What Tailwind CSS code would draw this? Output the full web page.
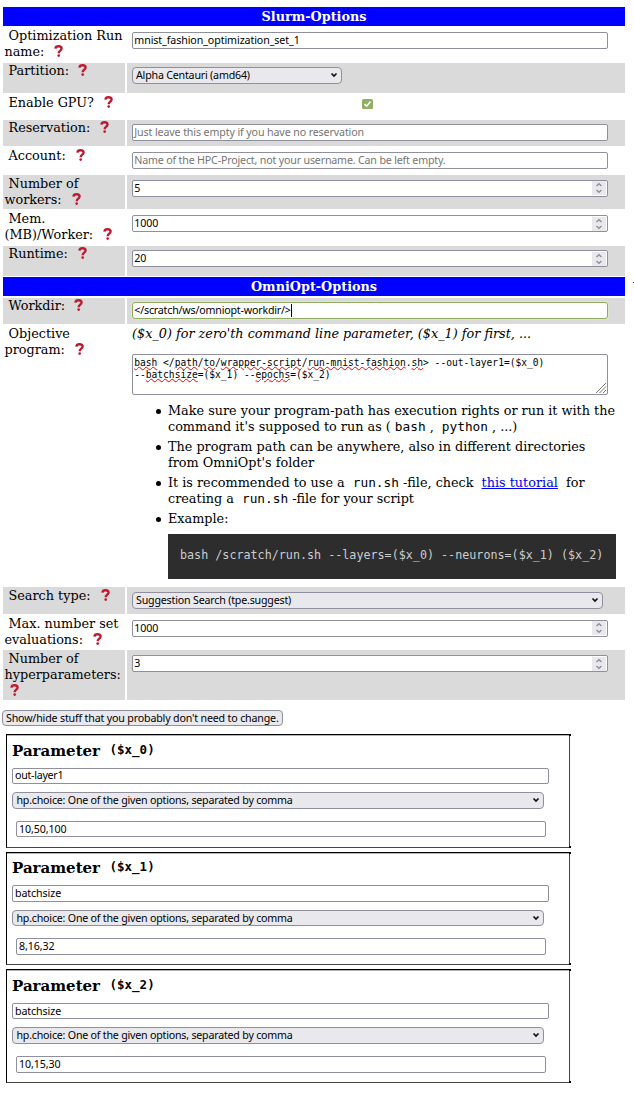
<!DOCTYPE html>
<html lang="en">
<head>
<meta charset="utf-8">
<title>OmniOpt</title>
<script src="https://cdn.jsdelivr.net/npm/@tailwindcss/browser@4"></script>
</head>
<body class="relative bg-white h-[1093px] overflow-hidden pt-[7px] text-[12.8px] leading-4 text-black font-['DejaVu_Serif',serif]">
<svg class="hidden">
  <symbol id="q" viewBox="0 0 9 12"><path d="M1.400 3.700C1.600 2 2.800 1.300 4.500 1.300c1.900 0 3.100.9 3.100 2.300 0 1.200-.8 1.800-1.700 2.300C5.100 6.400 4.700 6.900 4.700 8.200" fill="none" stroke="#be1931" stroke-width="2.400"/><circle cx="4.700" cy="10.600" r="1.350" fill="#be1931"/></symbol>
  <symbol id="chev" viewBox="0 0 8 6"><path d="M1.500 1.500 4 4l2.500-2.500" fill="none" stroke="#111" stroke-width="1.700"/></symbol>
  <symbol id="spin" viewBox="0 0 14 14"><path d="M4.500 5 7 2.800 9.500 5M4.500 9 7 11.200 9.500 9" fill="none" stroke="#8f8f9d" stroke-width="1.500"/></symbol>
</svg>

<main class="ml-[3px] w-[622px] flex flex-col">
  <h1 class="h-[19px] bg-[#0000ff] text-white font-bold text-center leading-[19px]">Slurm-Options</h1>

  <div class="mt-[2px] grid grid-cols-[122px_496px] gap-x-1 h-[33px]">
    <div class="pl-[1.5px] whitespace-nowrap"><span class="ml-1">Optimization Run</span><br>name:<svg class="inline align-[-1px] ml-[10px] w-[9px] h-3"><use href="#q"/></svg></div>
    <div class="pl-[3px] pt-1"><div class="w-[476px] h-[17px] bg-white border border-[#8f8f9d] rounded-[2px] pl-[1.3px] leading-[14px] text-[10.67px] font-['Noto_Sans',sans-serif] tracking-[-.09px]">mnist_fashion_optimization_set_1</div></div>
  </div>

  <div class="mt-[2px] flex gap-[2px] h-[30px]">
    <div class="w-[122px] bg-[#dadada] pl-[5.500px]">Partition:<svg class="inline align-[-1px] ml-[9px] w-[9px] h-3"><use href="#q"/></svg></div>
    <div class="w-[498px] bg-[#dadada] pl-[5px] pt-1"><div class="w-[210px] h-[17px] flex items-center justify-between bg-[#e9e9ed] border border-[#8f8f9d] rounded-[4px] pl-[3px] pr-[3px] leading-[14px] pb-px text-[10.67px] font-['Noto_Sans',sans-serif] tracking-[-.2px]">Alpha Centauri (amd64)<svg class="w-2 h-1.5"><use href="#chev"/></svg></div></div>
  </div>

  <div class="mt-[2px] flex gap-[2px] h-[23px]">
    <div class="w-[122px] pl-[5.500px]">Enable GPU?<svg class="inline align-[-1px] ml-[10px] w-[9px] h-3"><use href="#q"/></svg></div>
    <div class="w-[498px] pl-[235px] pt-1"><svg class="w-[11px] h-[10px]" viewBox="0 0 11 10"><rect width="11" height="10" rx="1.500" fill="#92ae62"/><path d="M2.500 5.200 4.600 7.200 8.500 2.500" fill="none" stroke="#fff" stroke-width="1.600"/></svg></div>
  </div>

  <div class="mt-[2px] flex gap-[2px] h-[26px]">
    <div class="w-[122px] bg-[#dadada] pl-[5.500px]">Reservation:<svg class="inline align-[-1px] ml-[10px] w-[9px] h-3"><use href="#q"/></svg></div>
    <div class="w-[498px] bg-[#dadada] pl-[5px] pt-1"><div class="w-[476px] h-[17px] bg-white border border-[#8f8f9d] rounded-[2px] pl-[1.3px] leading-[14px] text-[10.67px] font-['Noto_Sans',sans-serif] text-[#757575] tracking-[-.12px]">Just leave this empty if you have no reservation</div></div>
  </div>

  <div class="mt-[2px] flex gap-[2px] h-[25px]">
    <div class="w-[122px] pl-[5.500px]">Account:<svg class="inline align-[-1px] ml-[10px] w-[9px] h-3"><use href="#q"/></svg></div>
    <div class="w-[498px] pl-[5px] pt-1"><div class="w-[476px] h-[17px] bg-white border border-[#8f8f9d] rounded-[2px] pl-[1.3px] leading-[14px] text-[10.67px] font-['Noto_Sans',sans-serif] text-[#757575] tracking-[-.175px]">Name of the HPC-Project, not your username. Can be left empty.</div></div>
  </div>

  <div class="mt-[2px] flex gap-[2px] h-[34px]">
    <div class="w-[122px] bg-[#dadada] pl-[1.5px] pt-px"><span class="ml-1">Number of</span><br>workers:<svg class="inline align-[-1px] ml-[10px] w-[9px] h-3"><use href="#q"/></svg></div>
    <div class="w-[498px] bg-[#dadada] pl-[5px] pt-[5px]"><div class="w-[476px] h-[17px] flex justify-between bg-white border border-[#8f8f9d] rounded-[2px] pl-[1.3px] pr-px leading-[14px] text-[10.67px] font-['Noto_Sans',sans-serif]">5<svg class="w-[14px] h-[14px] bg-[#e9e9ed]"><use href="#spin"/></svg></div></div>
  </div>

  <div class="mt-[2px] flex gap-[2px] h-[33px]">
    <div class="w-[122px] pl-[1.5px]"><span class="ml-1">Mem.</span><br>(MB)/Worker:<svg class="inline align-[-1px] ml-[10px] w-[9px] h-3"><use href="#q"/></svg></div>
    <div class="w-[498px] pl-[5px] pt-1"><div class="w-[476px] h-[17px] flex justify-between bg-white border border-[#8f8f9d] rounded-[2px] pl-[1.3px] pr-px leading-[14px] text-[10.67px] font-['Noto_Sans',sans-serif] tracking-[-.1px]">1000<svg class="mt-px w-[14px] h-[14px] bg-[#e9e9ed]"><use href="#spin"/></svg></div></div>
  </div>

  <div class="mt-[2px] flex gap-[2px] h-[30px]">
    <div class="w-[122px] bg-[#dadada] pl-[5.500px]">Runtime:<svg class="inline align-[-1px] ml-[10px] w-[9px] h-3"><use href="#q"/></svg></div>
    <div class="w-[498px] bg-[#dadada] pl-[5px] pt-1"><div class="w-[476px] h-[17px] flex justify-between bg-white border border-[#8f8f9d] rounded-[2px] pl-[1.3px] pr-px leading-[14px] text-[10.67px] font-['Noto_Sans',sans-serif] tracking-[-.1px]">20<svg class="mt-px w-[14px] h-[14px] bg-[#e9e9ed]"><use href="#spin"/></svg></div></div>
  </div>

  <h1 class="mt-px h-[19px] bg-[#0000ff] text-white font-bold text-center leading-[19px]">OmniOpt-Options</h1>

  <div class="mt-[2px] flex gap-[2px] h-[26px]">
    <div class="w-[122px] bg-[#dadada] pl-[5.500px]">Workdir:<svg class="inline align-[-1px] ml-[9px] w-[9px] h-3"><use href="#q"/></svg></div>
    <div class="w-[498px] bg-[#dadada] pl-[5px] pt-1"><div class="w-[476px] h-[17px] flex bg-white border border-[#8fac5f] rounded-[3px] ring-1 ring-[#dce8c8] pl-[1.3px] leading-[14px] text-[10.67px] font-['Noto_Sans',sans-serif] tracking-[-.19px]">&lt;/scratch/ws/omniopt-workdir/&gt;<span class="mt-px w-px h-[13px] bg-black"></span></div></div>
  </div>

  <div class="mt-[2px] flex gap-[2px] h-[259px]">
    <div class="w-[122px] pl-[1.5px]"><span class="ml-1">Objective</span><br>program:<svg class="inline align-[-1px] ml-[10px] w-[9px] h-3"><use href="#q"/></svg></div>
    <div class="w-[498px] pl-[5px]">
      <p class="italic whitespace-nowrap">($x_0) for zero'th command line parameter, ($x_1) for first, ...</p>
      <div class="relative mt-3 w-[476px] h-[41px] bg-white border border-[#8f8f9d] rounded-[2px] pl-[1.2px] pt-[2px] leading-3 text-[9.6px] font-['DejaVu_Sans_Mono',monospace] whitespace-nowrap"><span class="underline decoration-wavy decoration-[#ff0000] decoration-[0.8px] underline-offset-0">bash</span> &lt;/<span class="underline decoration-wavy decoration-[#ff0000] decoration-[0.8px] underline-offset-0">path</span>/<span class="underline decoration-wavy decoration-[#ff0000] decoration-[0.8px] underline-offset-0">to</span>/<span class="underline decoration-wavy decoration-[#ff0000] decoration-[0.8px] underline-offset-0">wrapper-script</span>/<span class="underline decoration-wavy decoration-[#ff0000] decoration-[0.8px] underline-offset-0">run-mnist-fashion</span>.<span class="underline decoration-wavy decoration-[#ff0000] decoration-[0.8px] underline-offset-0">sh</span>&gt; --out-layer1=($x_0)<br>--<span class="underline decoration-wavy decoration-[#ff0000] decoration-[0.8px] underline-offset-0">batchsize</span>=($x_1) --<span class="underline decoration-wavy decoration-[#ff0000] decoration-[0.8px] underline-offset-0">epochs</span>=($x_2)
        <svg class="absolute right-px bottom-px w-[10px] h-[10px]" viewBox="0 0 10 10"><path d="M0 10 10 0M3.500 10 10 3.500M7 10l3-3" stroke="#666" stroke-width=".9"/></svg>
      </div>
      <ul class="mt-2 pl-9 flex flex-col gap-1 whitespace-nowrap">
        <li class="relative before:absolute before:-left-3 before:top-[6px] before:size-[5px] before:rounded-full before:bg-black">Make sure your program-path has execution rights or run it with the<br>command it's supposed to run as (<code class="px-1 font-['DejaVu_Sans_Mono',monospace] leading-none text-[12.8px]">bash</code>, <code class="px-1 font-['DejaVu_Sans_Mono',monospace] leading-none text-[12.8px]">python</code>, ...)</li>
        <li class="relative before:absolute before:-left-3 before:top-[6px] before:size-[5px] before:rounded-full before:bg-black">The program path can be anywhere, also in different directories<br>from OmniOpt's folder</li>
        <li class="relative before:absolute before:-left-3 before:top-[6px] before:size-[5px] before:rounded-full before:bg-black">It is recommended to use a <code class="px-1 font-['DejaVu_Sans_Mono',monospace] leading-none text-[12.8px]">run.sh</code>-file, check <a class="mx-1 text-[#0000ee] underline">this tutorial</a> for<br>creating a <code class="px-1 font-['DejaVu_Sans_Mono',monospace] leading-none text-[12.8px]">run.sh</code>-file for your script</li>
        <li class="relative before:absolute before:-left-3 before:top-[6px] before:size-[5px] before:rounded-full before:bg-black">Example:
          <pre class="mt-[7px] w-[448px] h-[45px] bg-[#2d2d2d] text-[#cccccc] pl-3 pt-3 leading-[18px] text-[11.72px] font-['DejaVu_Sans_Mono',monospace]">bash /scratch/run.sh --layers=($x_0) --neurons=($x_1) ($x_2)</pre>
        </li>
      </ul>
    </div>
  </div>

  <div class="mt-[2px] flex gap-[2px] h-[27px]">
    <div class="w-[122px] bg-[#dadada] pl-[5.500px] pt-px">Search type:<svg class="inline align-[-1px] ml-[10px] w-[9px] h-3"><use href="#q"/></svg></div>
    <div class="w-[498px] bg-[#dadada] pl-[5px] pt-[5px]"><div class="w-[471px] h-[17px] flex items-center justify-between bg-[#e9e9ed] border border-[#8f8f9d] rounded-[4px] pl-[3px] pr-[3px] leading-[14px] pb-px text-[10.67px] font-['Noto_Sans',sans-serif] tracking-[-.19px]">Suggestion Search (tpe.suggest)<svg class="w-2 h-1.5"><use href="#chev"/></svg></div></div>
  </div>

  <div class="mt-[2px] flex gap-[2px] h-[32px]">
    <div class="w-[122px] pl-[1.5px] whitespace-nowrap"><span class="ml-1">Max. number set</span><br>evaluations:<svg class="inline align-[-1px] ml-[10px] w-[9px] h-3"><use href="#q"/></svg></div>
    <div class="w-[498px] pl-[5px] pt-1"><div class="w-[476px] h-[17px] flex justify-between bg-white border border-[#8f8f9d] rounded-[2px] pl-[1.3px] pr-px leading-[14px] text-[10.67px] font-['Noto_Sans',sans-serif] tracking-[-.1px]">1000<svg class="w-[14px] h-[14px] bg-[#e9e9ed]"><use href="#spin"/></svg></div></div>
  </div>

  <div class="mt-[2px] flex gap-[2px] h-[50px]">
    <div class="w-[122px] bg-[#dadada] pl-[1.5px] pt-px"><span class="ml-1">Number of</span><br>hyperparameters:<br><svg class="inline align-[-1px] ml-[5.500px] w-[9px] h-3"><use href="#q"/></svg></div>
    <div class="w-[498px] bg-[#dadada] pl-[5px] pt-[5px]"><div class="w-[476px] h-[17px] flex justify-between bg-white border border-[#8f8f9d] rounded-[2px] pl-[1.3px] pr-px leading-[14px] text-[10.67px] font-['Noto_Sans',sans-serif]">3<svg class="mt-px w-[14px] h-[14px] bg-[#e9e9ed]"><use href="#spin"/></svg></div></div>
  </div>
</main>

<button class="block mt-[10px] ml-[2px] w-[281px] h-4 bg-[#e9e9ed] border border-[#8f8f9d] rounded-[4px] pl-[3px] text-left whitespace-nowrap leading-[12px] text-[10.67px] font-['Noto_Sans',sans-serif] tracking-[-.17px]">Show/hide stuff that you probably don't need to change.</button>

<section class="relative mt-2 ml-[6px] w-[564px] h-[114px] border-t border-l border-black border-r border-b border-r-[#444] border-b-[#444] shadow-[inset_0_1px_#b5b5b5] pl-[5px] pt-2">
  <h2 class="h-[18px] font-bold text-[15px] leading-4">Parameter<code class="relative -top-[2px] ml-[9.5px] text-[12.5px] leading-none font-['DejaVu_Sans_Mono',monospace]">($x_0)</code></h2>
  <div class="mt-[7px] w-[537px] h-4 border border-[#8f8f9d] rounded-[2px] pl-[2px] leading-[13px] text-[10.67px] font-['Noto_Sans',sans-serif] tracking-[-.27px]">out-layer1</div>
  <div class="mt-2 w-[532px] h-[17px] flex items-center justify-between bg-[#e9e9ed] border border-[#8f8f9d] rounded-[4px] pl-[3.5px] pr-[3px] pb-px leading-[14px] text-[10.67px] font-['Noto_Sans',sans-serif] tracking-[-.215px]">hp.choice: One of the given options, separated by comma<svg class="w-2 h-1.5"><use href="#chev"/></svg></div>
  <div class="mt-3 ml-1 w-[530px] h-4 border border-[#8f8f9d] rounded-[2px] pl-[2px] leading-[14px] text-[10.67px] font-['Noto_Sans',sans-serif] tracking-[-.1px]">10,50,100</div>
  <i class="absolute -right-[2px] -top-px w-[2px] h-[2px] bg-black"></i><i class="absolute -right-[2px] -bottom-px w-[2px] h-[2px] bg-black"></i>
</section>

<section class="relative mt-1 ml-[6px] w-[564px] h-[113px] border-t border-l border-black border-r border-b border-r-[#444] border-b-[#444] shadow-[inset_0_1px_#b5b5b5] pl-[5px] pt-[7px]">
  <h2 class="h-[18px] font-bold text-[15px] leading-4">Parameter<code class="relative -top-[2px] ml-[9.5px] text-[12.5px] leading-none font-['DejaVu_Sans_Mono',monospace]">($x_1)</code></h2>
  <div class="mt-[7px] w-[537px] h-[17px] border border-[#8f8f9d] rounded-[2px] pl-[2px] leading-[14px] text-[10.67px] font-['Noto_Sans',sans-serif] tracking-[-.1px]">batchsize</div>
  <div class="mt-2 w-[532px] h-4 flex items-center justify-between bg-[#e9e9ed] border border-[#8f8f9d] rounded-[4px] pl-[3.5px] pr-[3px] leading-[14px] text-[10.67px] font-['Noto_Sans',sans-serif] tracking-[-.215px]">hp.choice: One of the given options, separated by comma<svg class="w-2 h-1.5"><use href="#chev"/></svg></div>
  <div class="mt-3 ml-1 w-[530px] h-[17px] border border-[#8f8f9d] rounded-[2px] pl-[2px] leading-[14px] text-[10.67px] font-['Noto_Sans',sans-serif] tracking-[-.1px]">8,16,32</div>
  <i class="absolute -right-[2px] -top-px w-[2px] h-[2px] bg-black"></i><i class="absolute -right-[2px] -bottom-px w-[2px] h-[2px] bg-black"></i>
</section>

<section class="relative mt-1 ml-[6px] w-[564px] h-[114px] border-t border-l border-black border-r border-b border-r-[#444] border-b-[#444] shadow-[inset_0_1px_#b5b5b5] pl-[5px] pt-2">
  <h2 class="h-[18px] font-bold text-[15px] leading-4">Parameter<code class="relative -top-[2px] ml-[9.5px] text-[12.5px] leading-none font-['DejaVu_Sans_Mono',monospace]">($x_2)</code></h2>
  <div class="mt-[7px] w-[537px] h-4 border border-[#8f8f9d] rounded-[2px] pl-[2px] leading-[14px] text-[10.67px] font-['Noto_Sans',sans-serif] tracking-[-.1px]">batchsize</div>
  <div class="mt-2 w-[532px] h-[17px] flex items-center justify-between bg-[#e9e9ed] border border-[#8f8f9d] rounded-[4px] pl-[3.5px] pr-[3px] pb-px leading-[14px] text-[10.67px] font-['Noto_Sans',sans-serif] tracking-[-.215px]">hp.choice: One of the given options, separated by comma<svg class="w-2 h-1.5"><use href="#chev"/></svg></div>
  <div class="mt-3 ml-1 w-[530px] h-[17px] border border-[#8f8f9d] rounded-[2px] pl-[2px] leading-[14px] text-[10.67px] font-['Noto_Sans',sans-serif] tracking-[-.1px]">10,15,30</div>
  <i class="absolute -right-[2px] -top-px w-[2px] h-[2px] bg-black"></i><i class="absolute -right-[2px] -bottom-px w-[2px] h-[2px] bg-black"></i>
</section>
<i class="absolute left-[633px] top-[282px] w-px h-px bg-[#333]"></i>
</body>
</html>
